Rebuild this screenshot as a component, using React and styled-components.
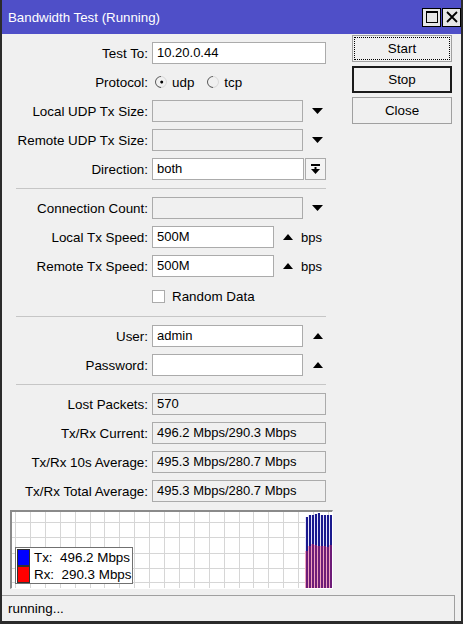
import React from 'react'
import styled, { createGlobalStyle, css } from 'styled-components'

const GlobalStyle = createGlobalStyle`
  html, body {
    margin: 0;
    padding: 0;
    background: #F0F0F0;
  }
  body {
    font-family: "Liberation Sans", Arial, sans-serif;
    font-size: 13px;
    color: #000;
  }
`

const Window = styled.div`
  width: 463px;
  height: 624px;
  box-sizing: border-box;
  display: flex;
  flex-direction: column;
  background: #F0F0F0;
  border-left: 2px solid #2B2B2B;
  border-right: 2px solid #2B2B2B;
  border-bottom: 3px solid #2B2B2B;
`

const TitleBar = styled.div`
  height: 34px;
  flex: none;
  display: flex;
  align-items: center;
  justify-content: space-between;
  background: #4F4FC8;
  color: #FFF;
  padding-left: 6px;
`

const TitleText = styled.span`
  font-size: 13.3px;
`

const TitleButtons = styled.div`
  display: flex;
  gap: 1px;
`

const TitleButton = styled.div`
  width: 19px;
  height: 19px;
  box-sizing: border-box;
  border: 1px solid #000;
  background: #E6E6E6;
  display: flex;
  align-items: center;
  justify-content: center;
`

const Top = styled.div`
  display: flex;
  align-items: flex-start;
`

const Form = styled.div`
  width: 324px;
  padding-top: 8px;
  display: flex;
  flex-direction: column;
  gap: 7px;
`

const Row = styled.div`
  display: grid;
  grid-template-columns: 146px 1fr;
  column-gap: 4px;
  align-items: center;
  height: ${p => p.$h || 22}px;
`

const Label = styled.div`
  text-align: right;
  white-space: nowrap;
  font-size: 13.4px;
`

const Controls = styled.div`
  display: flex;
  align-items: center;
  height: 100%;
`

const Field = styled.div`
  width: ${p => p.$w}px;
  height: 22px;
  box-sizing: border-box;
  border: 1px solid #ABABAB;
  background: ${p => (p.$disabled ? '#F0F0F0' : '#FFF')};
  padding-left: 4px;
  line-height: 20px;
  white-space: nowrap;
  overflow: hidden;
`

const Arrow = styled.span`
  display: inline-flex;
  margin-left: ${p => p.$ml || 9}px;
`

const Unit = styled.span`
  margin-left: 8px;
`

const DropButton = styled.div`
  width: 21px;
  height: 22px;
  box-sizing: border-box;
  margin-left: 1px;
  border: 1px solid #ABABAB;
  background: #F4F4F4;
  display: flex;
  align-items: center;
  justify-content: center;
`

const Radio = styled.span`
  width: 12px;
  height: 12px;
  box-sizing: border-box;
  border-radius: 50%;
  border: 1px solid;
  border-color: #5A5A5A #D8D8D8 #D8D8D8 #5A5A5A;
  transform: rotate(-45deg);
  margin-left: ${p => p.$ml}px;
  display: inline-flex;
  align-items: center;
  justify-content: center;
  ${p =>
    p.$checked &&
    css`
      &::after {
        content: '';
        width: 3px;
        height: 3px;
        border-radius: 50%;
        background: #000;
      }
    `}
`

const OptionText = styled.span`
  margin-left: 5px;
  font-size: 13.4px;
`

const Checkbox = styled.span`
  width: 13px;
  height: 13px;
  box-sizing: border-box;
  border: 1px solid #ABABAB;
  background: #FFF;
`

const CheckText = styled.span`
  margin-left: 7px;
  font-size: 13.4px;
`

const Separator = styled.div`
  height: 1px;
  width: 310px;
  margin: 1px 0 1px 14px;
  background: #C6C6C6;
`

const ButtonCol = styled.div`
  margin-left: 26px;
  padding-top: 1px;
  display: flex;
  flex-direction: column;
  gap: 4px;
`

const Button = styled.div`
  width: 100px;
  height: 27px;
  box-sizing: border-box;
  display: flex;
  align-items: center;
  justify-content: center;
  background: #F0F0F0;
  border: 1px solid #A0A0A0;
  position: relative;
  font-size: 13.4px;
  ${p =>
    p.$default &&
    css`
      border: 2px solid #1A1A1A;
    `}
  ${p =>
    p.$focus &&
    css`
      &::after {
        content: '';
        position: absolute;
        inset: 1px;
        border: 1px dotted #000;
      }
    `}
`

const Chart = styled.div`
  position: relative;
  margin: 8px 0 0 8px;
  width: 323px;
  height: 79px;
  box-sizing: border-box;
  border-top: 2px solid #8A8A8A;
  border-left: 2px solid #8A8A8A;
  border-bottom: 1px solid #FFF;
  border-right: 1px solid #FFF;
  background: #FFF;
`

const Legend = styled.div`
  position: absolute;
  left: 3px;
  top: 35px;
  width: 118px;
  height: 37px;
  box-sizing: border-box;
  border: 1px solid #707070;
  background: #FFF;
  padding: 1px 0 0 1px;
  display: flex;
  flex-direction: column;
  font-size: 13.4px;
`

const LegendItem = styled.div`
  display: flex;
  align-items: center;
  height: 17px;
`

const Swatch = styled.span`
  width: 13px;
  height: 17px;
  box-sizing: border-box;
  border: 1px solid #303030;
  background: ${p => p.$color};
  margin-right: 4px;
`

const StatusBar = styled.div`
  margin-top: auto;
  height: 26px;
  box-sizing: border-box;
  margin-right: 6px;
  border-top: 1px solid #A0A0A0;
  border-right: 1px solid #A0A0A0;
  padding-left: 6px;
  display: flex;
  align-items: center;
  font-size: 13.4px;
`

const Down = () => (
  <svg width="11" height="6" viewBox="0 0 11 6">
    <polygon points="0,0 11,0 5.5,6" fill="#000" />
  </svg>
)

const Up = () => (
  <svg width="10" height="6" viewBox="0 0 10 6">
    <polygon points="0,6 10,6 5,0" fill="#000" />
  </svg>
)

const txTops = [5, 3, 3, 2, 1, 3, 3, 3, 3]
const rxTops = [39, 34, 32, 33, 34, 34, 34, 35, 33]

const ChartDrawing = () => {
  const vlines = []
  for (let x = 3; x < 320; x += 14.9) vlines.push(Math.round(x) + 0.5)
  const hlines = [10, 25, 41, 56, 70].map(y => y + 0.5)
  return (
    <svg width="320" height="76" style={{ display: 'block' }}>
      {vlines.map(x => (
        <line key={'v' + x} x1={x} x2={x} y1="0" y2="76" stroke="#D6D6D6" />
      ))}
      {hlines.map(y => (
        <line key={'h' + y} x1="0" x2="320" y1={y} y2={y} stroke="#D6D6D6" />
      ))}
      {txTops.map((t, i) => (
        <rect key={'tf' + i} x={293 + i * 3} y={t} width="3" height={76 - t} fill="#E6E6FA" />
      ))}
      {rxTops.map((t, i) => (
        <rect key={'rf' + i} x={293 + i * 3} y={t} width="3" height={76 - t} fill="#EFA2BC" />
      ))}
      {txTops.map((t, i) => (
        <rect key={'t' + i} x={294 + i * 3} y={t} width="2" height={76 - t} fill="#1A1A8E" />
      ))}
      {rxTops.map((t, i) => (
        <rect key={'r' + i} x={294 + i * 3} y={t} width="2" height={76 - t} fill="#6E1C78" />
      ))}
    </svg>
  )
}

const FormRow = ({ label, children, h }) => (
  <Row $h={h}>
    <Label>{label}</Label>
    <Controls>{children}</Controls>
  </Row>
)

export default function App() {
  return (
    <>
      <GlobalStyle />
      <Window>
        <TitleBar>
          <TitleText>Bandwidth Test (Running)</TitleText>
          <TitleButtons>
            <TitleButton>
              <svg width="12" height="12" viewBox="0 0 12 12">
                <rect x="0.5" y="0.5" width="11" height="11" fill="none" stroke="#000" />
                <rect x="0" y="0" width="12" height="2" fill="#000" />
              </svg>
            </TitleButton>
            <TitleButton>
              <svg width="12" height="12" viewBox="0 0 12 12">
                <path d="M1 1 L11 11 M11 1 L1 11" stroke="#000" strokeWidth="1.8" />
              </svg>
            </TitleButton>
          </TitleButtons>
        </TitleBar>

        <Top>
          <Form>
            <FormRow label="Test To:">
              <Field $w={174}>10.20.0.44</Field>
            </FormRow>
            <FormRow label="Protocol:">
              <Radio $checked $ml={3} />
              <OptionText>udp</OptionText>
              <Radio $ml={13} />
              <OptionText>tcp</OptionText>
            </FormRow>
            <FormRow label="Local UDP Tx Size:">
              <Field $w={151} $disabled />
              <Arrow><Down /></Arrow>
            </FormRow>
            <FormRow label="Remote UDP Tx Size:">
              <Field $w={151} $disabled />
              <Arrow><Down /></Arrow>
            </FormRow>
            <FormRow label="Direction:">
              <Field $w={152}>both</Field>
              <DropButton>
                <svg width="9" height="11" viewBox="0 0 9 11">
                  <rect x="0" y="0" width="9" height="2" fill="#000" />
                  <rect x="3.5" y="3" width="2" height="3" fill="#000" />
                  <polygon points="0,5 9,5 4.5,10" fill="#000" />
                </svg>
              </DropButton>
            </FormRow>

            <Separator />

            <FormRow label="Connection Count:">
              <Field $w={151} $disabled />
              <Arrow><Down /></Arrow>
            </FormRow>
            <FormRow label="Local Tx Speed:">
              <Field $w={122}>500M</Field>
              <Arrow><Up /></Arrow>
              <Unit>bps</Unit>
            </FormRow>
            <FormRow label="Remote Tx Speed:">
              <Field $w={122}>500M</Field>
              <Arrow><Up /></Arrow>
              <Unit>bps</Unit>
            </FormRow>
            <FormRow label="" h={24}>
              <Checkbox />
              <CheckText>Random Data</CheckText>
            </FormRow>

            <Separator />

            <FormRow label="User:">
              <Field $w={151}>admin</Field>
              <Arrow $ml={10}><Up /></Arrow>
            </FormRow>
            <FormRow label="Password:">
              <Field $w={151} />
              <Arrow $ml={10}><Up /></Arrow>
            </FormRow>

            <Separator />

            <FormRow label="Lost Packets:">
              <Field $w={174} $disabled>570</Field>
            </FormRow>
            <FormRow label="Tx/Rx Current:">
              <Field $w={174} $disabled>496.2 Mbps/290.3 Mbps</Field>
            </FormRow>
            <FormRow label="Tx/Rx 10s Average:">
              <Field $w={174} $disabled>495.3 Mbps/280.7 Mbps</Field>
            </FormRow>
            <FormRow label="Tx/Rx Total Average:">
              <Field $w={174} $disabled>495.3 Mbps/280.7 Mbps</Field>
            </FormRow>
          </Form>

          <ButtonCol>
            <Button $focus>Start</Button>
            <Button $default>Stop</Button>
            <Button>Close</Button>
          </ButtonCol>
        </Top>

        <Chart>
          <ChartDrawing />
          <Legend>
            <LegendItem>
              <Swatch $color="#0000FF" />
              Tx:&nbsp; 496.2 Mbps
            </LegendItem>
            <LegendItem>
              <Swatch $color="#FF0000" />
              Rx:&nbsp; 290.3 Mbps
            </LegendItem>
          </Legend>
        </Chart>

        <StatusBar>running...</StatusBar>
      </Window>
    </>
  )
}
